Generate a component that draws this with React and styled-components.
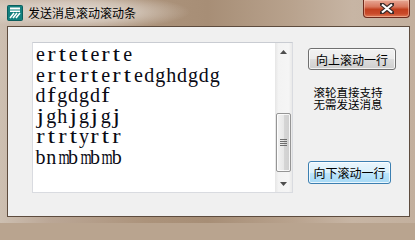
import styled, { createGlobalStyle } from 'styled-components';

const lines = [
  'erteterte',
  'ertertertedghdgdg',
  'dfgdgdf',
  'jghjgjgj',
  'rtrtyrtr',
  'bnmbmbmb',
];

// serif glyphs that are too wide or too narrow for a fixed-pitch cell
const squeeze = { m: 0.72, w: 0.75, r: 1.25, t: 1.3, f: 1.25, j: 1.3, i: 1.3, l: 1.3 };

const GlobalStyle = createGlobalStyle`
  body {
    margin: 0;
    background: #b9a48f;
  }
`;

const AppIcon = () => (
  <svg width="16" height="16" viewBox="0 0 16 16">
    <rect x="0.5" y="0.5" width="15" height="15" rx="1" fill="#13807f" stroke="#0b5e5d" />
    <rect x="3" y="2.5" width="10" height="2" fill="#fff" />
    <rect x="3" y="5.5" width="10" height="1.5" fill="#fff" />
    <path d="M3 13 L7 8 M6 13 L10 8 M9 13 L13 8" stroke="#fff" strokeWidth="1.6" />
  </svg>
);

const CloseGlyph = () => (
  <svg width="14" height="11" viewBox="0 0 14 11">
    <path
      d="M1.5 1 L12.5 10 M12.5 1 L1.5 10"
      stroke="#3a2a28"
      strokeWidth="4.4"
      strokeLinecap="square"
    />
    <path
      d="M2 1.5 L12 9.5 M12 1.5 L2 9.5"
      stroke="#fff"
      strokeWidth="2.2"
    />
  </svg>
);

const ArrowUp = () => (
  <svg width="7" height="4" viewBox="0 0 7 4">
    <path d="M0 4 L3.5 0 L7 4 Z" fill="#4d4d4d" />
  </svg>
);

const ArrowDown = () => (
  <svg width="7" height="4" viewBox="0 0 7 4">
    <path d="M0 0 L7 0 L3.5 4 Z" fill="#4d4d4d" />
  </svg>
);

// the edit uses a serif fixed-pitch face; each glyph sits in its own cell
const MonoLine = ({ text }) => (
  <Line>
    {text.split('').map((ch, i) => (
      <Cell key={i} $scale={squeeze[ch] || 1}>
        {ch}
      </Cell>
    ))}
  </Line>
);

const App = () => {
  return (
    <>
      <GlobalStyle />
      <Window>
        <TitleBar>
          <AppIcon />
          <Title>发送消息滚动滚动条</Title>
          <CloseButton>
            <CloseGlyph />
          </CloseButton>
        </TitleBar>
        <Client>
          <EditBox>
            <EditText>
              {lines.map(line => (
                <MonoLine key={line} text={line} />
              ))}
            </EditText>
            <ScrollBar>
              <ScrollArrow>
                <ArrowUp />
              </ScrollArrow>
              <ScrollTrack>
                <ScrollThumb>
                  <Grip />
                </ScrollThumb>
              </ScrollTrack>
              <ScrollArrow>
                <ArrowDown />
              </ScrollArrow>
            </ScrollBar>
          </EditBox>
          <SideColumn>
            <Button width="88px">向上滚动一行</Button>
            <Note>
              <NoteLine>滚轮直接支持</NoteLine>
              <NoteLine>无需发送消息</NoteLine>
            </Note>
            <Button width="83px" focused>
              向下滚动一行
            </Button>
          </SideColumn>
        </Client>
      </Window>
    </>
  );
};

const Window = styled.div`
  width: 415px;
  height: 223px;
  display: flex;
  flex-direction: column;
  box-sizing: border-box;
  background: linear-gradient(
    to right,
    #cdbfb1 0%,
    #bba796 12%,
    #ac937b 35%,
    #a78e76 50%,
    #b8a28d 70%,
    #c7b5a4 85%,
    #c3b09e 100%
  );
  font-family: 'Noto Sans CJK SC', 'Noto Sans', sans-serif;
`;

const TitleBar = styled.div`
  height: 26px;
  flex: none;
  display: flex;
  align-items: center;
  padding-left: 7px;
  gap: 5px;
  background: radial-gradient(
    ellipse 110px 18px at 80px 12px,
    rgba(236, 230, 224, 0.85) 0%,
    rgba(236, 230, 224, 0.5) 55%,
    rgba(236, 230, 224, 0) 100%
  );
`;

const Title = styled.span`
  font-size: 12px;
  line-height: 14px;
  color: #000;
  margin-top: -1px;
`;

const CloseButton = styled.div`
  margin-left: auto;
  margin-right: 5px;
  align-self: flex-start;
  width: 47px;
  height: 18px;
  box-sizing: border-box;
  display: flex;
  align-items: center;
  justify-content: center;
  border: 1px solid #6e2a1c;
  border-top: none;
  border-radius: 0 0 4px 4px;
  background: linear-gradient(
    #e7a896 0%,
    #d8765c 40%,
    #c2401f 55%,
    #c94a2a 80%,
    #de7a56 100%
  );
  box-shadow: inset 0 0 0 1px rgba(255, 220, 200, 0.45);
`;

const Client = styled.div`
  flex: 1;
  margin: 0 5px 6px 7px;
  border: 1px solid #5e4c3e;
  background: #f0f0f0;
  display: flex;
  align-items: flex-start;
  padding: 15px 0 0 24px;
`;

const EditBox = styled.div`
  width: 261px;
  height: 151px;
  box-sizing: border-box;
  border: 1px solid #d9dbe0;
  border-top-color: #c9ccd2;
  background: #fff;
  display: flex;
`;

const EditText = styled.div`
  flex: 1;
  padding: 1px 0 0 2px;
  font-family: 'Liberation Serif', 'DejaVu Serif', serif;
  font-size: 20px;
  line-height: 20.5px;
  color: #0a0a14;
`;

const Line = styled.div`
  display: flex;
  height: 20.5px;
`;

const Cell = styled.span`
  width: 10.9px;
  flex: none;
  text-align: center;
  transform: scaleX(${p => p.$scale});
`;

const ScrollBar = styled.div`
  width: 17px;
  display: flex;
  flex-direction: column;
  background: linear-gradient(to right, #e6e6e6, #f3f3f3 20%, #f5f5f5 80%, #e9e9e9);
`;

const ScrollArrow = styled.div`
  height: 17px;
  flex: none;
  display: flex;
  align-items: center;
  justify-content: center;
`;

const ScrollTrack = styled.div`
  flex: 1;
  padding-top: 53px;
`;

const ScrollThumb = styled.div`
  height: 59px;
  margin: 0 1px;
  box-sizing: border-box;
  border: 1px solid #959595;
  border-radius: 2px;
  background: linear-gradient(to right, #f3f3f3, #e8e8e8 50%, #d6d6d6 51%, #cfcfcf);
  box-shadow: inset 0 0 0 1px rgba(255, 255, 255, 0.8);
  display: flex;
  align-items: center;
  justify-content: center;
`;

const Grip = styled.div`
  width: 7px;
  height: 7px;
  background: repeating-linear-gradient(
    to bottom,
    #5a5a5a 0px,
    #5a5a5a 1px,
    transparent 1px,
    transparent 2px
  );
  opacity: 0.85;
`;

const SideColumn = styled.div`
  display: flex;
  flex-direction: column;
  align-items: flex-start;
  margin-left: 15px;
  padding-top: 6px;
`;

const Button = styled.div`
  width: ${p => p.width};
  height: ${p => (p.focused ? '23px' : '22px')};
  box-sizing: border-box;
  display: flex;
  align-items: center;
  justify-content: center;
  font-size: 12px;
  color: #000;
  border: 1px solid ${p => (p.focused ? '#3c7fb1' : '#707070')};
  border-radius: 3px;
  background: ${p =>
    p.focused
      ? 'linear-gradient(#eaf6fd 0%, #d9f0fc 50%, #bee6fd 51%, #a7d9f5 100%)'
      : 'linear-gradient(#f2f2f2 0%, #ebebeb 50%, #dddddd 51%, #cfcfcf 100%)'};
  box-shadow: inset 0 0 0 1px rgba(255, 255, 255, 0.75);
`;

const Note = styled.div`
  margin: 16px 0 51px 4px;
  width: 72px;
  display: flex;
  flex-direction: column;
  color: #000;
`;

const NoteLine = styled.div`
  height: 12px;
  font-size: 11.5px;
  line-height: 12px;
  text-align: center;
  white-space: nowrap;
`;

export default App;
